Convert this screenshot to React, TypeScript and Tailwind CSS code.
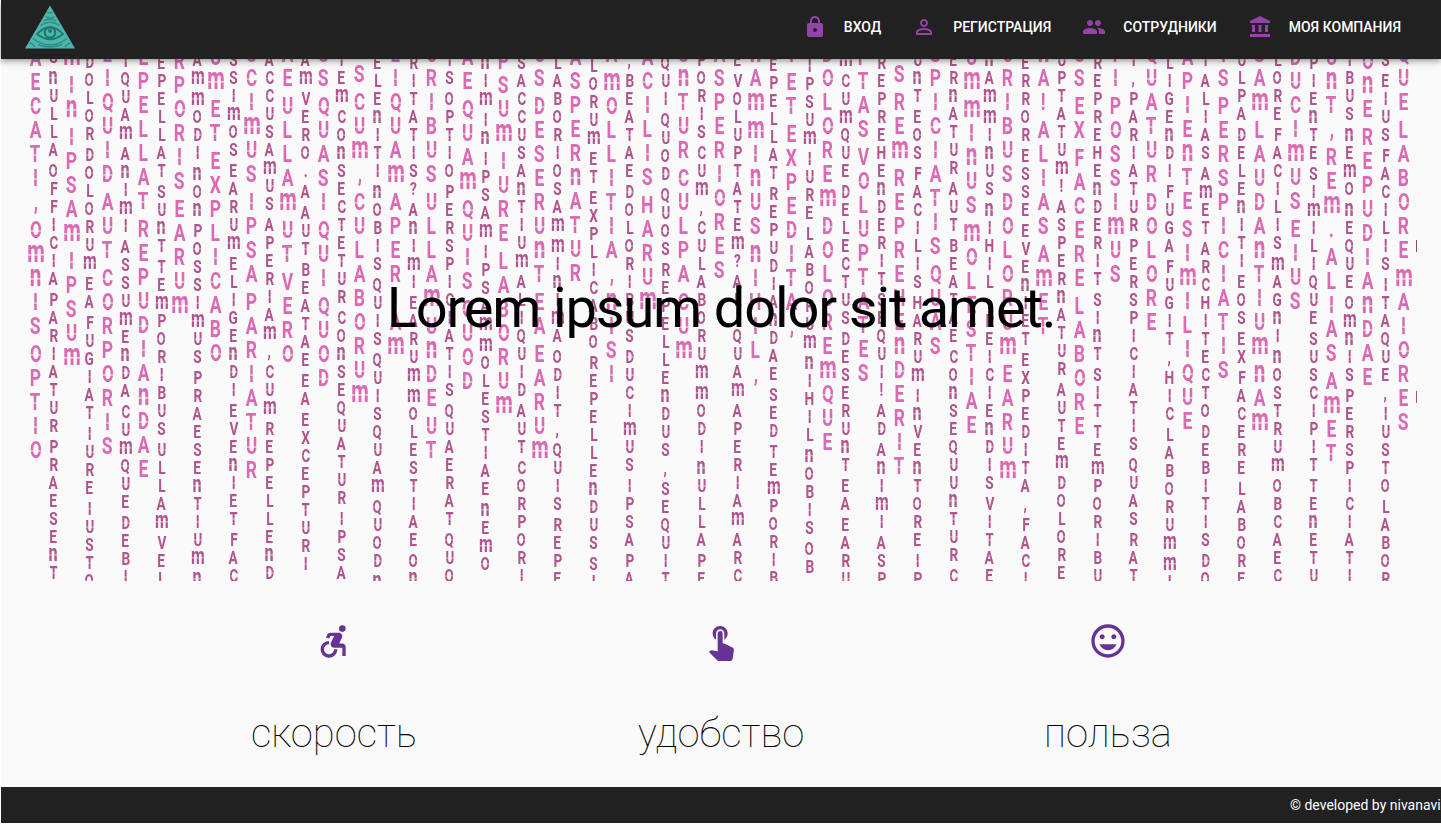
import React from "react";
import {
  MdLock,
  MdPersonOutline,
  MdPeople,
  MdAccountBalance,
  MdAccessibleForward,
  MdTouchApp,
  MdOutlineTagFaces,
} from "react-icons/md";

type Column = [start: number, text: string];

const HEADER_HEIGHT = 59;

/* Wide bright columns: vertical centre of the first glyph, then the text. */
const BRIGHT: Column[] = [
  [59, "AECATI, OMNIS OPTIO"],
  [58, "M IN IPSAM IPSUM"],
  [55, "LIQUID AUT CORPORIS"],
  [58, "EPELLAT REPUDIANDAE"],
  [62, "RPORIS EARUM"],
  [58, "UM ET EXPLICABO"],
  [54.5, "UCIMUS IPSA PARIATUR"],
  [55, "AE ULLAM UT VERO"],
  [54.5, "US QUASI QUI QUOD"],
  [75, "S CUM, CULABORUM"],
  [54.5, "LIQUAM APERIAM"],
  [54.5, "ORIBUS ULLAM UNDE UT"],
  [58, "AE QUAM QUIS QUOD"],
  [62, "PSUM IURE LABORUM"],
  [54.5, "OS DESERUNT EA EARUM"],
  [58, "ASPERNATUR"],
  [54.5, "A MOLLITIA, NISI"],
  [58, "ACILIS HARUM"],
  [54.5, "UNTUR CULPA CUM"],
  [54.5, "ASPERIORES"],
  [54.5, "NAM MINUS NIHIL,"],
  [54.5, "I ET EXPEDITA,"],
  [54.5, "DOLOREM DOLOREMQUE"],
  [58, "PTAS VOLUPTATES"],
  [75, "S REM REPREHENDERIT"],
  [54.5, "SPICIATIS QUAS"],
  [58, "UM MINUS MOLESTIAE"],
  [54.5, "ORIBUS DOLORUM EARUM"],
  [54.5, "NA! ALIAS AMET"],
  [54.5, "US EX FACERE LABORE"],
  [54.5, "TI POSSIMUS"],
  [54.5, "QUATUR DOLORE"],
  [58, "APIENTE SIMILIQUE"],
  [54.5, "IS PERSPICIATIS"],
  [54.5, "SAM LAUDANTIUM NAM"],
  [58, "DUCIMUS EIUS"],
  [58, "UNT, REM. ALIAS AMET"],
  [62, "ONE REPUDIANDAE"],
  [54.5, "QUE LABORE MAIORES"],
];

/* Narrow dark columns, running to the bottom edge. */
const DARK: Column[] = [
  [56.5, "S NULLA OFFICIA PARIATUR PRAESENT"],
  [62, "DOLOR DOLORUM EA FUGIAT IURE IUSTO"],
  [60.5, "IQUAM ANIMI ASSUMENDA CUMQUE DEBI"],
  [62.5, "EPELLAT SUNT TEMPORIBUS ULLAM VEL"],
  [60, "AM MODI NON POSSIMUS PRAESENTIUM N"],
  [60, "SSIMOS EARUM ELIGENDI EVENIET FAC"],
  [60, "ACCUSAMUS APERIAM, CUM REPELLEND"],
  [60, "AM VERO. A AUT BEATAE EA EXCEPTURI"],
  [60, "TEM CONSECTETUR CONSEQUATUR IPSA"],
  [63, "ELENITI NOBIS QUIS QUISQUAM QUOD N"],
  [63, "RITATIS? ANIMI EARUM MOLESTIAE ON"],
  [60, "IS OPTIO PERSPICIATIS QUAERAT QUO"],
  [63, "NIM IN IPSAM IPSAM MOLESTIAE NEMO"],
  [63, "SACCUSANTIUM ALIQUID AUT CORPORI"],
  [63, "LABORIOSAM MINIMA ODIT, QUIS REPE"],
  [65.5, "LORUM ET EXPLICABO REPELLENDUS SI"],
  [60, ", BEATAE DOLORIBUS DUCIMUS IPSA PA"],
  [63, "QUI QUOD QUOS REPELLENDUS, SEQUIT"],
  [60, "PORIS CUM, CULABORUM MODI NULLA PE"],
  [60, "E VOLUPTATEM? ALIQUAM APERIAM ARC"],
  [65, "EPELLAT REPUDIANDAE SED TEMPORIB"],
  [65.5, "IPSUM IURE LABORUM NIHIL NOBIS OB"],
  [60, "M CUMQUE DELECTUS DESERUNT EA EARU"],
  [63, "REPREHENDERIT SEQUI! AD ANIMI ASP"],
  [60, "UNT EOS FACILIS HARUM INVENTORE IP"],
  [60, "ERNATUR AUT BEATAE CONSEQUUNTUR C"],
  [60, "NAM MINUS NIHIL, REICIENDIS VITAE"],
  [63, "ERROR ESSE EVENIET EXPEDITA, FACI"],
  [60, "UPTATUM! ASPERNATUR AUTEM DOLORE"],
  [63, "REPREHENDERIT SINT SIT TEMPORIBU"],
  [60, "I, PARIATUR PERSPICIATIS QUAS RAT"],
  [63, "LIGENDI FUGA FUGIT, HIC LABORUM MI"],
  [60, "T ALIAS AMET ARCHITECTO DEBITIS DO"],
  [60, "ULPA DELENITI EOS EX FACERE LABORE"],
  [60, "LORE FACILIS MAGNI NOSTRUM OBCAEC"],
  [63, "PIENTE SIMILIQUE SUSCIPIT TENETU"],
  [60, "IBUS NEMO NEQUE OMNIS PERSPICIATI"],
  [60, "S EIUS FACILIS ITAQUE, IUSTO LABOR"],
];

const SPLIT =
  "[mask-image:linear-gradient(#000_46%,#0004_49%,#0004_51%,#000_54%)]";
const SPLIT_LOW =
  "[mask-image:linear-gradient(#000_55%,#0004_57%,#0004_59%,#000_61%)]";

function glyphShape(char: string, bright: boolean): string {
  const origin = bright ? "origin-[50%_20px]" : "origin-[50%_15px]";
  if (char === "M") return `lowercase scale-x-[0.88] scale-y-[1.33] ${origin} ${SPLIT_LOW}`;
  if (char === "N") return `lowercase scale-x-[0.9] scale-y-[1.33] ${origin} ${SPLIT_LOW}`;
  if ("OUDQCIT".includes(char)) return `scale-x-[0.74] ${SPLIT}`;
  return "scale-x-[0.76]";
}

function RainColumn({ column, bright }: { column: Column; bright: boolean }) {
  const [start, text] = column;
  const pitch = bright ? 24 : 18;
  return (
    <div
      className={`flex w-[18px] shrink-0 flex-col items-center font-bold ${
        bright
          ? "text-[23px] leading-[24px] text-[#dc6ab3]"
          : "text-[18px] leading-[18px] text-[#b2548f]"
      }`}
      style={{ marginTop: start - pitch / 2 - HEADER_HEIGHT }}
    >
      {Array.from(text).map((char, i) =>
        char === " " ? (
          <span key={i} className={bright ? "h-1 shrink-0" : "h-[3px] shrink-0"} />
        ) : (
          <span
            key={i}
            className={`block shrink-0 ${bright ? "h-6" : "h-[18px]"} ${glyphShape(char, bright)}`}
          >
            {char}
          </span>
        ),
      )}
    </div>
  );
}

function Logo() {
  return (
    <svg width="50" height="44" viewBox="0 0 50 44" fill="none">
      <path d="M25 0.5 50 43.5H0Z" fill="#4db6ac" />
      <g stroke="#2f8d83" strokeWidth="1.4">
        <path d="M22.5 7.2q2.5 1.6 5 0" />
        <path d="M20.5 11.5q4.500 3 9 0" />
        <path d="M18.500 16q6.500-3.500 13 0" />
        <path d="M15.500 20.500q9.500-6.500 19 0" />
        <path d="M12 29Q25 15.500 38 29 25 39.500 12 29Z" stroke="#22766d" strokeWidth="1.8" />
        <circle cx="25" cy="27.500" r="5.200" stroke="#22766d" strokeWidth="2.200" />
        <path d="M8 33.500q17 13 34 0" />
        <path d="M4.500 37.500q3.500 1.500 5.500 4.500M45.500 37.500q-3.500 1.500-5.500 4.500" />
        <path d="M13 39.500q12 5 24 0" />
      </g>
      <circle cx="25" cy="26" r="2" fill="#22766d" />
    </svg>
  );
}

const NAV = [
  { label: "Вход", Icon: MdLock },
  { label: "Регистрация", Icon: MdPersonOutline },
  { label: "Сотрудники", Icon: MdPeople },
  { label: "Моя компания", Icon: MdAccountBalance },
];

const FEATURES = [
  { label: "скорость", Icon: MdAccessibleForward },
  { label: "удобство", Icon: MdTouchApp },
  { label: "польза", Icon: MdOutlineTagFaces },
];

export default function App() {
  return (
    <div className="h-[824px] overflow-hidden bg-white pl-px font-['Roboto',sans-serif]">
      <div className="flex h-[823px] flex-col bg-[#fafafa]">
        <header className="relative z-10 flex h-[59px] shrink-0 items-center justify-between bg-[#212121] pr-10 pl-6 shadow-[0_2px_4px_-1px_rgba(0,0,0,0.2),0_4px_5px_rgba(0,0,0,0.14),0_1px_10px_rgba(0,0,0,0.12)]">
          <div className="-mt-[6px]">
            <Logo />
          </div>
          <nav className="-mt-[5px] flex gap-[31px]">
            {NAV.map(({ label, Icon }) => (
              <a key={label} className="flex items-center gap-[17px]">
                <Icon className="size-6 text-[#9543ab]" />
                <span className="text-sm font-medium text-white uppercase">{label}</span>
              </a>
            ))}
          </nav>
        </header>

        <section className="relative h-[522px] w-[1416px] shrink-0 overflow-hidden">
          <div className="flex items-start pl-[25.5px]">
            {BRIGHT.map((column, i) => (
              <React.Fragment key={i}>
                <RainColumn column={column} bright />
                {DARK[i] && <RainColumn column={DARK[i]} bright={false} />}
              </React.Fragment>
            ))}
            <div className="ml-[3px] flex w-px flex-col gap-[139px] pt-[181px]">
              <span className="h-3 w-px bg-[#8f4a74]" />
              <span className="h-3 w-px bg-[#ad4b8b]" />
            </div>
          </div>
          <h1 className="absolute top-[217px] left-0 w-[1440px] text-center text-[56px] leading-[64px] tracking-[-1.17px] whitespace-nowrap text-black">
            Lorem ipsum dolor sit amet.
          </h1>
        </section>

        <section className="mx-auto grid w-[1161px] grow grid-cols-3">
          {FEATURES.map(({ label, Icon }) => (
            <div key={label} className="flex flex-col items-center pt-10">
              <Icon className="size-10 text-[#673296]" />
              <p className="mt-[49px] text-[40px] leading-[48px] font-thin text-black">{label}</p>
            </div>
          ))}
        </section>

        <footer className="flex h-9 shrink-0 items-center overflow-hidden bg-[#212121] pl-[1289px]">
          <p className="text-sm whitespace-nowrap text-white">© developed by nivanavi</p>
        </footer>
      </div>
    </div>
  );
}
